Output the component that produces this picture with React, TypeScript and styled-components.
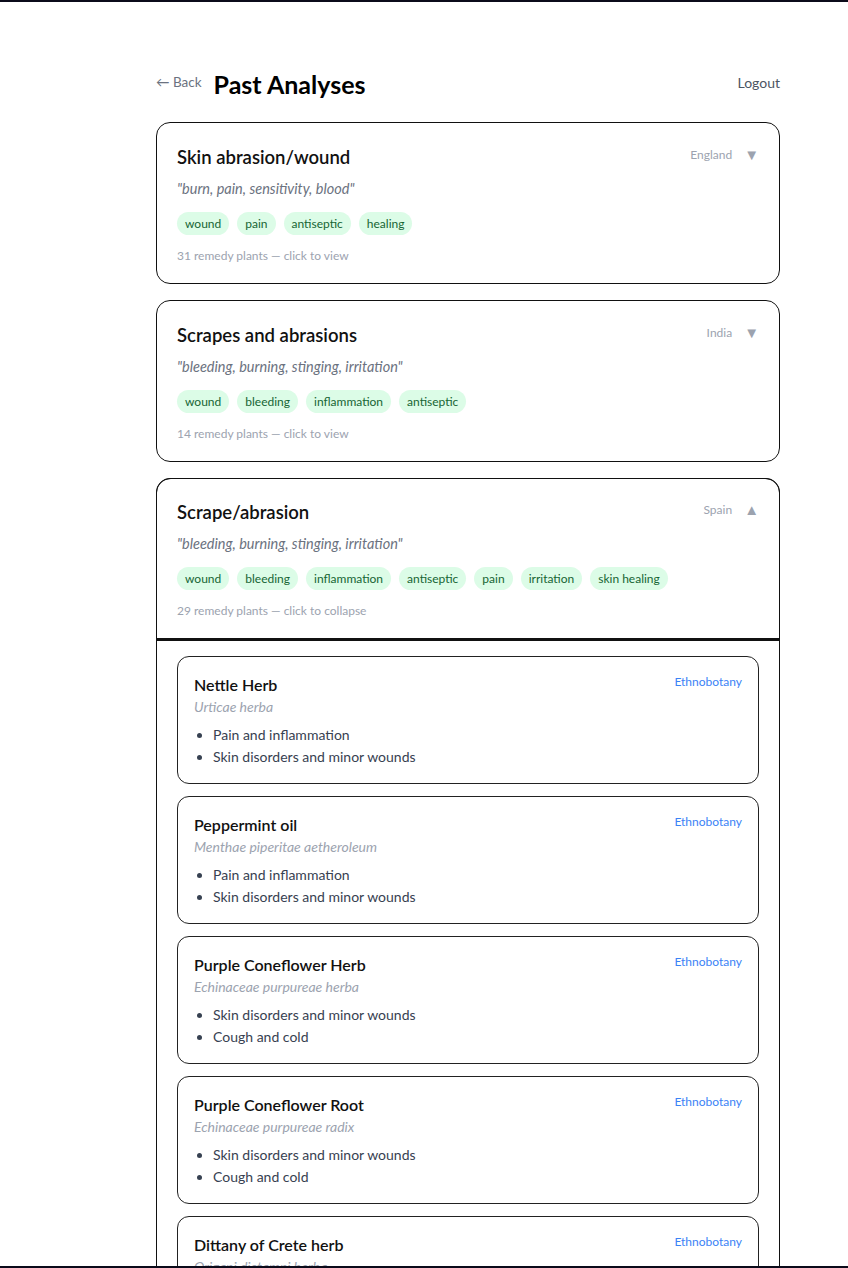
import React, { FC } from 'react';
import styled, { createGlobalStyle } from 'styled-components';

const GlobalStyle = createGlobalStyle`
  html, body {
    margin: 0;
    padding: 0;
    background: #fff;
  }

  body {
    font-family: Lato, 'Noto Sans', sans-serif;
    color: #111;
  }

  * {
    box-sizing: border-box;
  }
`;

interface Plant {
  name: string;
  latin: string;
  uses: string[];
}

interface Analysis {
  title: string;
  quote: string;
  country: string;
  tags: string[];
  count: number;
  open?: boolean;
}

const analyses: Analysis[] = [
  {
    title: 'Skin abrasion/wound',
    quote: 'burn, pain, sensitivity, blood',
    country: 'England',
    tags: ['wound', 'pain', 'antiseptic', 'healing'],
    count: 31,
  },
  {
    title: 'Scrapes and abrasions',
    quote: 'bleeding, burning, stinging, irritation',
    country: 'India',
    tags: ['wound', 'bleeding', 'inflammation', 'antiseptic'],
    count: 14,
  },
  {
    title: 'Scrape/abrasion',
    quote: 'bleeding, burning, stinging, irritation',
    country: 'Spain',
    tags: ['wound', 'bleeding', 'inflammation', 'antiseptic', 'pain', 'irritation', 'skin healing'],
    count: 29,
    open: true,
  },
];

const plants: Plant[] = [
  {
    name: 'Nettle Herb',
    latin: 'Urticae herba',
    uses: ['Pain and inflammation', 'Skin disorders and minor wounds'],
  },
  {
    name: 'Peppermint oil',
    latin: 'Menthae piperitae aetheroleum',
    uses: ['Pain and inflammation', 'Skin disorders and minor wounds'],
  },
  {
    name: 'Purple Coneflower Herb',
    latin: 'Echinaceae purpureae herba',
    uses: ['Skin disorders and minor wounds', 'Cough and cold'],
  },
  {
    name: 'Purple Coneflower Root',
    latin: 'Echinaceae purpureae radix',
    uses: ['Skin disorders and minor wounds', 'Cough and cold'],
  },
  {
    name: 'Dittany of Crete herb',
    latin: 'Origani dictamni herba',
    uses: ['Skin disorders and minor wounds', 'Pain and inflammation'],
  },
];

const Frame = styled.div`
  height: 100vh;
  overflow: hidden;
  border-top: 2px solid #0b0b1a;
  border-bottom: 2px solid #0b0b1a;
`;

const Page = styled.div`
  padding: 64px 68px 0 156px;
`;

const Header = styled.header`
  display: flex;
  align-items: center;
  justify-content: space-between;
  height: 36px;
  margin-bottom: 20px;
`;

const HeaderLeft = styled.div`
  display: flex;
  align-items: center;
  gap: 12px;
`;

const BackLink = styled.a`
  font-size: 13.5px;
  color: #6b7280;
  cursor: pointer;
  margin-top: -4px;
`;

const Title = styled.h1`
  margin: 0;
  font-size: 25px;
  font-weight: 700;
  color: #000;
`;

const Logout = styled.a`
  font-size: 14px;
  color: #4b5563;
  cursor: pointer;
  margin-top: -4px;
`;

const List = styled.div`
  display: flex;
  flex-direction: column;
  gap: 16px;
`;

const Card = styled.section<{ $open?: boolean }>`
  border: 1px solid #111;
  border-radius: ${({ $open }) => ($open ? '14px 14px 0 0' : '14px')};
`;

const CardHead = styled.div<{ $open?: boolean }>`
  display: flex;
  justify-content: space-between;
  align-items: flex-start;
  padding: ${({ $open }) => ($open ? '19px 20px 18px' : '20px 20px 18px')};
  cursor: pointer;
  border-radius: 14px 14px 0 0;
  ${({ $open }) => $open && 'border-bottom: 2px solid #111; box-shadow: 0 0 0 1px #111;'}
`;

const HeadMain = styled.div`
  display: flex;
  flex-direction: column;
`;

const CardTitle = styled.h2`
  margin: 0;
  font-size: 18.5px;
  line-height: 28px;
  font-weight: 600;
  color: #111;
`;

const Quote = styled.p`
  margin: 8px 0 0;
  font-size: 14.5px;
  line-height: 20px;
  font-style: italic;
  color: #6b7280;
`;

const Tags = styled.div`
  display: flex;
  flex-wrap: wrap;
  gap: 8px;
  margin-top: 13px;
`;

const Tag = styled.span`
  display: inline-flex;
  align-items: center;
  height: 23px;
  padding: 0 8px;
  border-radius: 12px;
  background: #dcfce7;
  color: #166534;
  font-size: 12px;
`;

const Hint = styled.div`
  margin-top: 12px;
  font-size: 12px;
  line-height: 18px;
  color: #9ca3af;
`;

const Meta = styled.div`
  display: flex;
  align-items: center;
  gap: 12px;
  margin-top: 2px;
  font-size: 12px;
  color: #9ca3af;
`;

const Arrow = styled.span`
  font-size: 15px;
  color: #9ca3af;
`;

const CardBody = styled.div`
  display: flex;
  flex-direction: column;
  gap: 12px;
  padding: 16px 20px 20px;
`;

const Plant = styled.article`
  display: flex;
  justify-content: space-between;
  align-items: flex-start;
  padding: 16px 16px 15px;
  border: 1px solid #222;
  border-radius: 12px;
`;

const PlantInfo = styled.div`
  display: flex;
  flex-direction: column;
`;

const PlantName = styled.h3`
  margin: 0;
  font-size: 16px;
  line-height: 24px;
  font-weight: 600;
  color: #111;
`;

const Latin = styled.div`
  font-size: 14px;
  line-height: 20px;
  font-style: italic;
  color: #9ca3af;
`;

const Uses = styled.ul`
  margin: 7px 0 0;
  padding-left: 19px;
  font-size: 14px;
  line-height: 22px;
  color: #374151;
`;

const Source = styled.span`
  font-size: 12px;
  line-height: 18px;
  color: #3b82f6;
`;

const AnalysisCard: FC<{ item: Analysis }> = ({ item }) => (
  <Card $open={item.open}>
    <CardHead $open={item.open}>
      <HeadMain>
        <CardTitle>{item.title}</CardTitle>
        <Quote>&quot;{item.quote}&quot;</Quote>
        <Tags>
          {item.tags.map((t) => <Tag key={t}>{t}</Tag>)}
        </Tags>
        <Hint>
          {item.count} remedy plants — click to {item.open ? 'collapse' : 'view'}
        </Hint>
      </HeadMain>
      <Meta>
        {item.country}
        <Arrow>{item.open ? '▲' : '▼'}</Arrow>
      </Meta>
    </CardHead>
    {item.open && (
      <CardBody>
        {plants.map((p) => (
          <Plant key={p.name}>
            <PlantInfo>
              <PlantName>{p.name}</PlantName>
              <Latin>{p.latin}</Latin>
              <Uses>
                {p.uses.map((u) => <li key={u}>{u}</li>)}
              </Uses>
            </PlantInfo>
            <Source>Ethnobotany</Source>
          </Plant>
        ))}
      </CardBody>
    )}
  </Card>
);

export default function App() {
  return (
    <>
      <GlobalStyle />
      <Frame>
        <Page>
          <Header>
            <HeaderLeft>
              <BackLink>← Back</BackLink>
              <Title>Past Analyses</Title>
            </HeaderLeft>
            <Logout>Logout</Logout>
          </Header>
          <List>
            {analyses.map((a) => <AnalysisCard key={a.title} item={a} />)}
          </List>
        </Page>
      </Frame>
    </>
  );
}
